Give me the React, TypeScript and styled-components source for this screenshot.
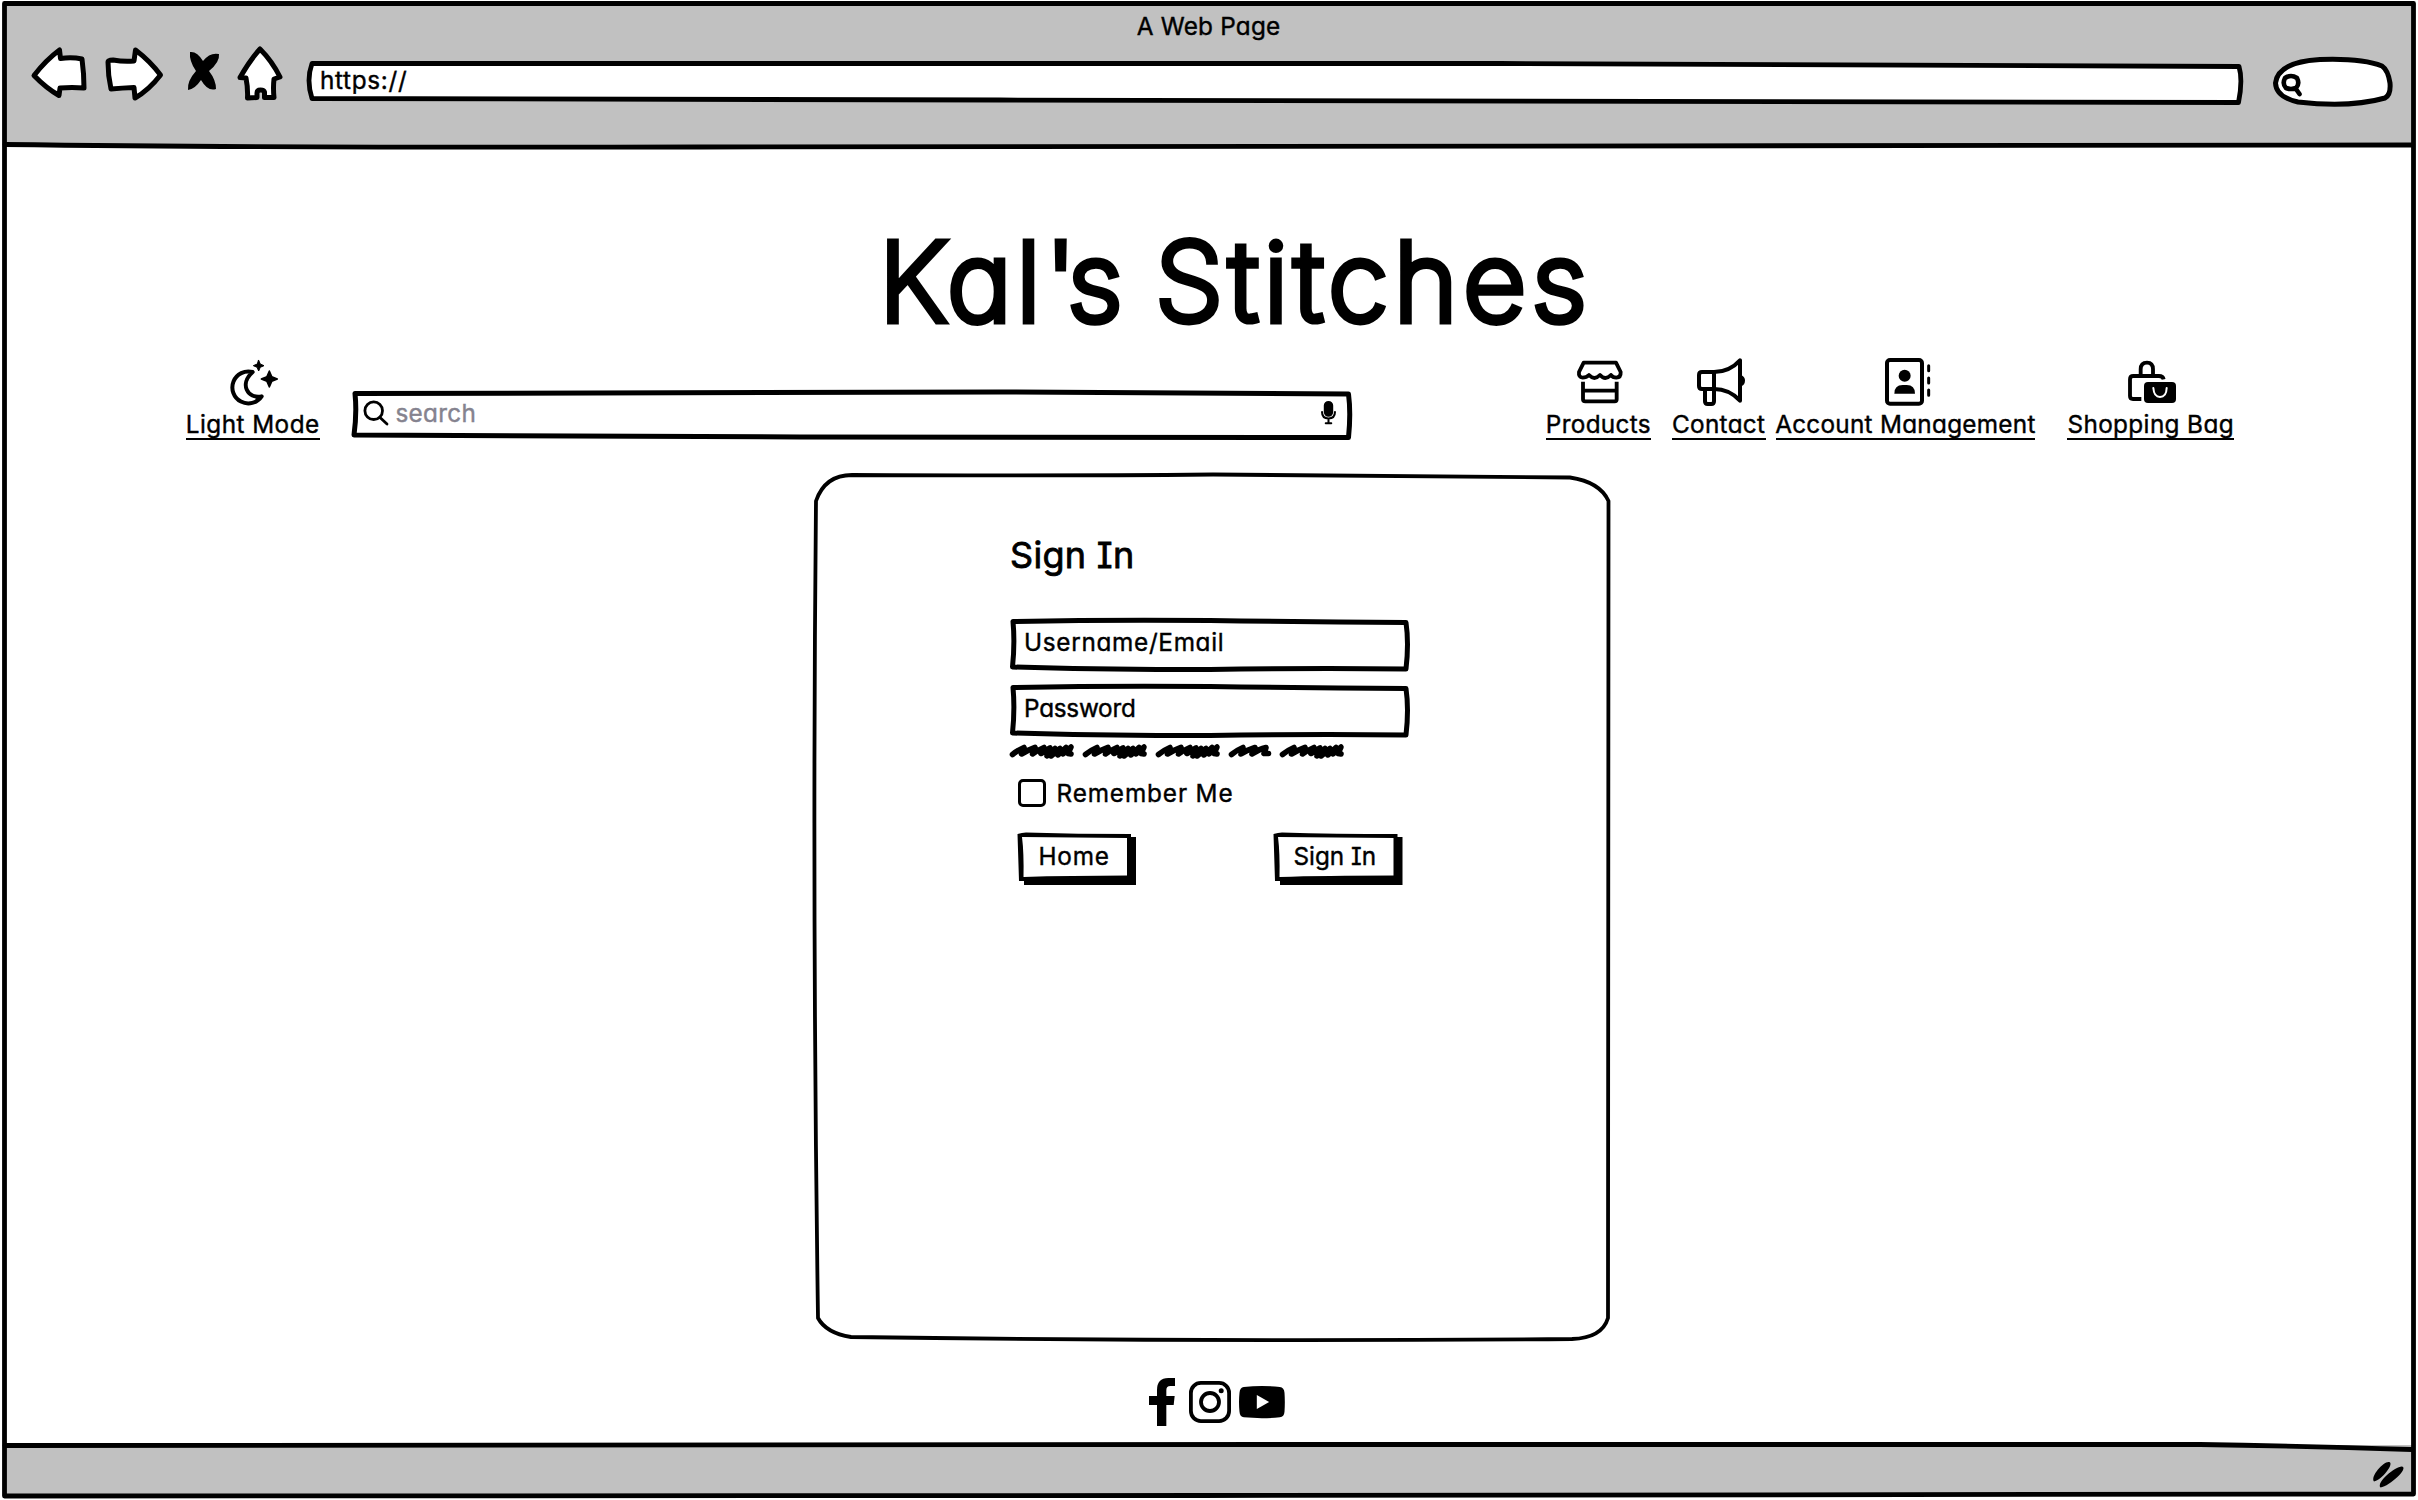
import React from "react";
import styled, { createGlobalStyle } from "styled-components";

const GlobalStyle = createGlobalStyle`
  *, *::before, *::after { box-sizing: border-box; }
  body {
    margin: 0;
    background: #fff;
    color: #000;
    font-family: Inter, "Liberation Sans", sans-serif;
    font-feature-settings: "cv11" 1, "cv08" 1;
  }
`;

const Screen = styled.div`
  position: relative;
  display: flex;
  flex-direction: column;
  width: 2418px;
  height: 1500px;
  padding: 3px 5px 4px 4px;
  overflow: hidden;
`;

const Ink = styled.svg<{ $stroke?: number }>`
  position: absolute;
  inset: 0;
  width: 100%;
  height: 100%;
  overflow: visible;
  pointer-events: none;
  fill: none;
  stroke: #000;
  stroke-width: ${(p) => p.$stroke ?? 4.6};
  stroke-linejoin: round;
  stroke-linecap: round;
`;

const Glyph = styled.svg<{ $w: number; $h: number; $stroke?: number; $fill?: string }>`
  display: block;
  flex: none;
  width: ${(p) => p.$w}px;
  height: ${(p) => p.$h}px;
  overflow: visible;
  fill: ${(p) => p.$fill ?? "none"};
  stroke: #000;
  stroke-width: ${(p) => p.$stroke ?? 0};
  stroke-linejoin: round;
  stroke-linecap: round;
`;

const Text = styled.span<{ $track?: number; $color?: string }>`
  font-size: 24.3px;
  font-weight: 400;
  line-height: 27px;
  letter-spacing: ${(p) => p.$track ?? 0}px;
  margin-right: ${(p) => -(p.$track ?? 0)}px;
  color: ${(p) => p.$color ?? "#000"};
  -webkit-text-stroke: 0.4px currentColor;
  white-space: nowrap;
`;

const Chrome = styled.header`
  flex: none;
  height: 143px;
  background: #c1c1c1;
`;

const WindowTitle = styled.div`
  display: flex;
  justify-content: center;
  height: 39px;
  padding-top: 10px;
`;

const NavRow = styled.div`
  display: flex;
  align-items: flex-start;
  padding-left: 26px;
`;

const Spacer = styled.div<{ $w: number }>`
  flex: none;
  width: ${(p) => p.$w}px;
`;

const AddressBar = styled.div`
  position: relative;
  width: 1938px;
  height: 42px;
  margin-top: 18px;
  padding: 7px 0 0 14px;
`;

const BarText = styled(Text)`
  position: relative;
  display: inline-block;
`;

const Content = styled.main`
  flex: 1;
  display: flex;
  flex-direction: column;
  background: #fff;
`;

const Brand = styled.h1`
  margin: 79.5px 0 0 875px;
  height: 110px;
  font-size: 109px;
  font-weight: 200;
  line-height: 110px;
  white-space: nowrap;
  -webkit-text-stroke: 6.8px #000;
  stroke-linejoin: round;
`;

const Letters = styled.span<{ $track: number }>`
  letter-spacing: ${(p) => p.$track}px;
`;

const Toolbar = styled.div`
  display: flex;
  align-items: flex-start;
  height: 84px;
  margin-top: 22.5px;
  padding-left: 181.5px;
`;

const Link = styled.a<{ $w: number; $shift: number }>`
  display: flex;
  flex-direction: column;
  align-items: center;
  flex: none;
  width: ${(p) => p.$w}px;
  color: #000;
  text-decoration: none;
  & > svg { margin-left: ${(p) => p.$shift * 2}px; }
`;

const LinkLabel = styled.div`
  display: flex;
  justify-content: center;
  width: 100%;
  height: 28.5px;
  margin-top: 5px;
  border-bottom: 2px solid #000;
`;

const SearchBox = styled.div`
  position: relative;
  display: flex;
  align-items: center;
  width: 1000px;
  height: 46px;
  margin-top: 33px;
  padding: 0 16px 2px 10.5px;
`;

const Grow = styled.div`
  flex: 1;
`;

const Card = styled.section`
  position: relative;
  flex: none;
  width: 797px;
  height: 868px;
  margin: 31px 0 0 809px;
  padding: 57px 0 0 197px;
`;

const FormTitle = styled.h2`
  margin: 0;
  height: 50px;
  font-size: 36px;
  font-weight: 400;
  line-height: 50px;
  letter-spacing: 0.3px;
  -webkit-text-stroke: 0.8px #000;
`;

const Fields = styled.div`
  display: flex;
  flex-direction: column;
  gap: 14px;
  margin-top: 38px;
`;

const FieldBox = styled.div`
  position: relative;
  display: flex;
  width: 398px;
  height: 52px;
  padding: 11px 0 0 14px;
`;

const Scribbles = styled.div`
  display: flex;
  gap: 9.4px;
  height: 14px;
  margin-top: 8px;
`;

const CheckRow = styled.label`
  display: flex;
  align-items: center;
  gap: 10.5px;
  margin: 21px 0 0 8px;
`;

const CheckBox = styled.span`
  width: 28px;
  height: 28px;
  border: 3.4px solid #000;
  border-radius: 5px;
`;

const Actions = styled.div`
  display: flex;
  justify-content: space-between;
  width: 392px;
  margin-top: 26px;
  padding-left: 8px;
`;

const ButtonBox = styled.button<{ $w: number; $pad: number }>`
  position: relative;
  display: flex;
  width: ${(p) => p.$w}px;
  height: 52px;
  padding: 10px 0 0 ${(p) => p.$pad}px;
  border: 0;
  background: none;
  font: inherit;
  font-feature-settings: inherit;
  text-align: left;
`;

const Social = styled.div`
  display: flex;
  align-items: center;
  height: 50px;
  margin: 36px 0 0 1145px;
`;

const StatusBar = styled.footer`
  display: flex;
  flex: none;
  justify-content: flex-end;
  height: 51px;
  padding: 17px 8px 0 0;
  background: #c1c1c1;
`;

const star = (x: number, y: number, r: number) => {
  const k = r * 0.3;
  return `M${x} ${y - r}L${x + k} ${y - k}L${x + r} ${y}L${x + k} ${y + k}L${x} ${y + r}L${x - k} ${y + k}L${x - r} ${y}L${x - k} ${y - k}Z`;
};

const MoonIcon = () => (
  <Glyph $w={48} $h={48} $stroke={12} viewBox="209 54 144 144">
    <path d="M277 96A48 48 0 1 0 304 169C262 178 236 132 277 96Z" />
    <path d={star(295, 77, 16)} fill="#000" strokeWidth="3" />
    <path d={star(327, 117, 24)} fill="#000" strokeWidth="4.500" />
  </Glyph>
);

const ShopIcon = () => (
  <Glyph $w={48} $h={48} $stroke={11.5} viewBox="169 54 144 144">
    <path d="M192 68H289L303 96Q304 112 290 113Q279 113 274 105Q265 114 257 114Q249 114 241 105Q232 114 224 114Q217 114 208 105Q200 113 189 113Q176 112 178 96Z" />
    <path d="M190 125V178Q190 184 197 184H285Q291 184 291 178V125M190 152H291" strokeLinecap="butt" />
  </Glyph>
);

const MegaphoneIcon = () => (
  <Glyph $w={48} $h={48} $stroke={12} viewBox="528 54 144 144">
    <path d="M579 96H543Q534 96 534 105V138Q534 147 543 147H579Z" />
    <path d="M579 96Q625 96 657 61V182Q625 147 579 147" />
    <path d="M552 150V184Q552 192 560 192H571Q579 192 579 184V150" />
    <path d="M660 105Q672 110 672 122Q672 134 660 139Z" fill="#000" stroke="none" />
  </Glyph>
);

const AccountIcon = () => (
  <Glyph $w={48} $h={48} $stroke={12} viewBox="75 54 144 144">
    <rect x="81" y="60" width="105" height="131" rx="9" />
    <g fill="#000" stroke="none">
      <circle cx="134" cy="107" r="18" />
      <path d="M103 161Q103 135 128 135H140Q165 135 165 161Z" />
    </g>
    <path d="M206 77V92M206 114V129M206 150V166" strokeWidth="9" />
  </Glyph>
);

const BagIcon = () => (
  <Glyph $w={48} $h={48} $stroke={11.5} viewBox="804 54 144 144">
    <path d="M842 104V88Q842 68 861 68Q879 68 879 88V104" />
    <path d="M844 177H819Q810 177 810 168V118Q810 108 820 108H897Q909 108 911 118" strokeLinecap="butt" />
    <rect x="852" y="126" width="96" height="63" rx="12" fill="#000" stroke="none" />
    <path d="M880 144Q882 171 900 171Q919 171 920 144" stroke="#fff" strokeWidth="6" />
  </Glyph>
);

const longMark = "M2.500 10.500Q8 6 14 3.500L11.500 10Q18 6 25 3.500L22.500 10Q28 6 34 3.500L31 9.500L40 4L37 12L45 4.500L41 12L50 4.500L48 11L56 3.500L53 10L61 3L58 9.500L61 10";
const shortMark = "M2.500 10.500Q8 6 14 3.500L12 10Q18 6 26 3.500L23 10Q30 5 37 3.500L35 9.500L39.500 9.500";

const Mark = ({ short = false }: { short?: boolean }) => (
  <Glyph $w={short ? 42 : 63.6} $h={14} $stroke={5.6} viewBox={short ? "0 0 42 14" : "0 0 63.600 14"}>
    <path d={short ? shortMark : longMark} />
  </Glyph>
);

const Field = ({ label, track }: { label: string; track: number }) => (
  <FieldBox>
    <Ink $stroke={5} viewBox="0 0 398 52">
      <path d="M3 3.500Q100 1.500 200 2.500Q300 4 396 4.500Q399 25 396 51Q300 50 200 51.500Q90 52 2.500 49Q5 25 3 3.500Z" />
    </Ink>
    <Text $track={track}>{label}</Text>
  </FieldBox>
);

const Button = ({ label, w, pad, track }: { label: string; w: number; pad: number; track: number }) => (
  <ButtonBox $w={w} $pad={pad} type="button">
    <Ink $stroke={0} viewBox={`0 0 ${w} 52`}>
      <path fill="#000" d={`M-0.500 1Q4 -0.500 8 -0.500Q60 1 ${w - 5} 1L${w - 5} 4H${w}V52H6V48H1Z`} />
      <path fill="#fff" d={`M4 4L${w - 9} 5V42.500Q50 42.500 5.500 44Q6 20 4 4Z`} />
    </Ink>
    <BarText $track={track}>{label}</BarText>
  </ButtonBox>
);

export default function App() {
  return (
    <>
      <GlobalStyle />
      <Screen>
        <Chrome>
          <WindowTitle><Text $track={0.22}>A Web Page</Text></WindowTitle>
          <NavRow>
            <Glyph $w={58} $h={58} $stroke={5} $fill="#fff" viewBox="30 42 58 58">
              <path d="M34 75.500Q46 60 59.500 50L60.500 58.500Q72 57 82 59Q84 74 84 88Q72 87 60 88L59 95.500Q46 88 34 75.500Z" />
            </Glyph>
            <Spacer $w={16} />
            <Glyph $w={60} $h={58} $stroke={5} $fill="#fff" viewBox="104 42 60 58">
              <path d="M108 62Q108 60 113 60Q124 62 134 61L135.500 50Q150 61 160.500 75Q149 90 135 98L134 87.500Q122 88 111 89Q108 76 108 62Z" />
            </Glyph>
            <Spacer $w={22} />
            <Glyph $w={36} $h={58} $fill="#000" viewBox="186 42 36 58">
              <path d="M190 52Q197 51 203 61Q210 52 219 54Q220 62 209 71Q216 80 216 89Q208 92 201 80Q195 89 188 90Q187 81 196 71Q189 61 190 52Z" />
            </Glyph>
            <Spacer $w={14} />
            <Glyph $w={48} $h={58} $stroke={5} $fill="#fff" viewBox="236 42 48 58">
              <path d="M260 49Q272 61 280 77L274 79Q273 88 274 97.500H264.500V92Q264 90 260.500 90Q257 90 257 93V97.500L247.500 98Q248 88 246 78L240 77.500Q250 60 260 49Z" />
            </Glyph>
            <Spacer $w={22} />
            <AddressBar>
              <Ink $stroke={4.8} viewBox="306 60 1938 42">
                <path fill="#fff" d="M312 63.500Q900 62 1500 63.500T2239 66.500Q2243 80 2238.500 102.500Q1600 101 1000 100T312 98.500Q306 80 312 63.500Z" />
              </Ink>
              <BarText $track={0.7}>https://</BarText>
            </AddressBar>
            <Spacer $w={28} />
            <Glyph $w={121} $h={58} $stroke={5} $fill="#fff" viewBox="2272 42 121 58">
              <path d="M2298 102Q2276 97 2275.500 83Q2278 62 2320 59.500Q2362 58 2382 66Q2388 70 2390 83Q2391 95 2385 98Q2350 108 2298 102Z" />
              <path d="M2286 88Q2282 84 2285 78Q2291 74 2297 78Q2300 84 2296 88Q2291 90 2286 88M2296 89L2299.500 94" strokeWidth="4.600" />
            </Glyph>
          </NavRow>
        </Chrome>

        <Content>
          <Brand>
            <Letters $track={4.6}>Kal</Letters>
            <Letters $track={-8.6}>'</Letters>
            <Letters $track={1}>s </Letters>
            <Letters $track={5.7}>Stitches</Letters>
          </Brand>
          <Toolbar>
            <Link $w={134} $shift={1}>
              <MoonIcon />
              <LinkLabel><Text $track={0.45}>Light Mode</Text></LinkLabel>
            </Link>
            <Spacer $w={33} />
            <SearchBox>
              <Ink $stroke={5} viewBox="353 389 1000 46">
                <path d="M355 391.500Q700 391 1000 390Q1200 390.500 1348.500 392Q1351 411 1348.500 435.500Q1100 436 800 435Q500 433 354 433Q357 411 355 391.500Z" />
              </Ink>
              <Glyph $w={26} $h={26} $stroke={2.8} viewBox="363 402 26 26">
                <circle cx="373.700" cy="412.700" r="8.800" />
                <path d="M380 419.500L387 426" />
              </Glyph>
              <Spacer $w={6.5} />
              <Text $track={0.3} $color="#85838f">search</Text>
              <Grow />
              <Glyph $w={17} $h={24} $stroke={2.2} viewBox="0 0 18 26">
                <rect x="5" y="1" width="8" height="15" rx="4" fill="#000" />
                <path d="M2 12Q2 19 9 19Q16 19 16 12M9 19V23.500M6 24H12" />
              </Glyph>
            </SearchBox>
            <Spacer $w={193} />
            <Link $w={105.5} $shift={2}>
              <ShopIcon />
              <LinkLabel><Text $track={0.33}>Products</Text></LinkLabel>
            </Link>
            <Spacer $w={20.5} />
            <Link $w={94} $shift={2}>
              <MegaphoneIcon />
              <LinkLabel><Text $track={0.33}>Contact</Text></LinkLabel>
            </Link>
            <Spacer $w={10} />
            <Link $w={259.5} $shift={3.5}>
              <AccountIcon />
              <LinkLabel><Text $track={0.28}>Account Management</Text></LinkLabel>
            </Link>
            <Spacer $w={32} />
            <Link $w={167} $shift={1.5}>
              <BagIcon />
              <LinkLabel><Text $track={0.38}>Shopping Bag</Text></LinkLabel>
            </Link>
          </Toolbar>

          <Card>
            <Ink $stroke={3.8} viewBox="813 473 797 868">
              <path d="M852 475Q1050 476 1213 474.500Q1400 476 1570 477.500Q1600 482 1608.500 501Q1610 900 1608 1318Q1602 1338 1572 1339Q1213 1342 851 1337Q826 1333 818 1318Q812 900 816 501Q825 475 852 475Z" />
            </Ink>
            <FormTitle>Sign In</FormTitle>
            <Fields>
              <Field label="Username/Email" track={0.7} />
              <Field label="Password" track={-0.25} />
            </Fields>
            <Scribbles>
              <Mark /><Mark /><Mark /><Mark short /><Mark />
            </Scribbles>
            <CheckRow>
              <CheckBox />
              <Text $track={0.88}>Remember Me</Text>
            </CheckRow>
            <Actions>
              <Button label="Home" w={118} pad={20.5} track={0.8} />
              <Button label="Sign In" w={128.5} pad={20} track={0} />
            </Actions>
          </Card>

          <Social>
            <Glyph $w={26} $h={48} $fill="#000" viewBox="57 54 78 144">
              <path d="M81 198V135H57V108H81V90Q81 54 115 54H135V78H121Q109 78 109 90V108H134L131 135H109V198Z" />
            </Glyph>
            <Spacer $w={14} />
            <Glyph $w={42} $h={42} $stroke={3.8} viewBox="0 0 42 42">
              <rect x="1.900" y="1.900" width="38.200" height="38.200" rx="10" />
              <circle cx="21" cy="21" r="9" />
              <circle cx="32.200" cy="9.700" r="2.500" fill="#000" stroke="none" />
            </Glyph>
            <Spacer $w={8} />
            <Glyph $w={46} $h={32} $fill="#000" viewBox="328 78 137 96">
              <path d="M342 81Q396 75 450 81Q463 83 464 98Q466 126 464 155Q463 170 450 172Q396 177 342 172Q330 170 329 155Q326 126 329 98Q330 83 342 81Z" />
              <path d="M381 105V147L418 126Z" fill="#fff" />
            </Glyph>
          </Social>
        </Content>

        <StatusBar>
          <Glyph $w={32} $h={26} $fill="#000" viewBox="2375 1462 32 26">
            <path d="M2376 1481.500C2372 1476 2386 1461 2391 1462C2397 1463 2384 1480 2376 1481.500ZM2382.500 1487.500C2378 1482 2398 1466 2404 1466.500C2411 1468 2392 1486 2382.500 1487.500Z" />
          </Glyph>
        </StatusBar>

        <Ink $stroke={4.8} viewBox="0 0 2418 1500">
          <path d="M4.500 3.500Q1200 2.500 2413.500 3.500Q2414.500 700 2413.500 1494Q1800 1497 1200 1495.500T4.500 1496Q3 700 4.500 3.500Z" />
          <path d="M5 144.500Q300 148 700 147Q1500 144 2412 145" />
          <path d="M5 1445.500Q700 1443 1300 1444.500T2200 1444.500Q2300 1446 2412 1449.500" />
        </Ink>
      </Screen>
    </>
  );
}
